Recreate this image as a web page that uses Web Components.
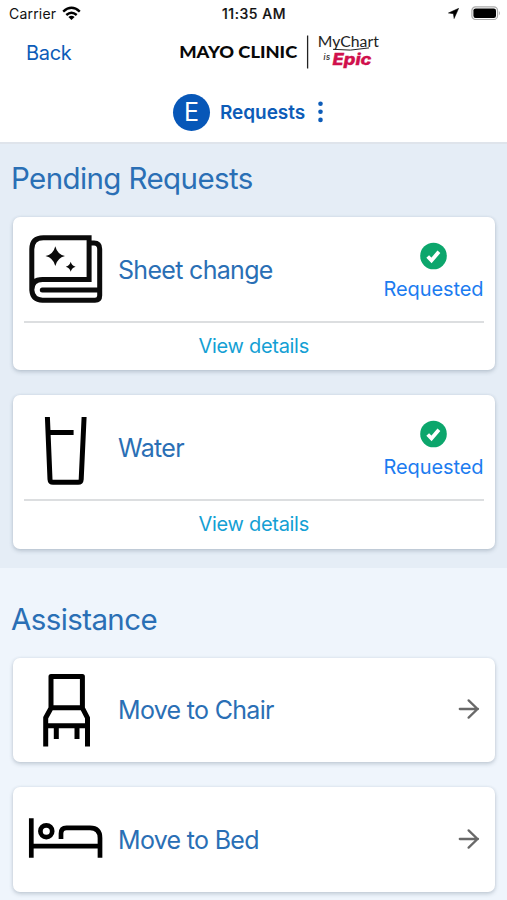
<!DOCTYPE html>
<html lang="en">
<head>
<meta charset="utf-8">
<title>Requests</title>
<style>
body{margin:0;width:507px;height:900px;overflow:hidden;background:#eff5fc;font-family:Inter,"Liberation Sans",sans-serif;color:#2a6fb5}
</style>
</head>
<body>
<requests-app></requests-app>
<script>
const define=(name,html,after)=>customElements.define(name,class extends HTMLElement{
  connectedCallback(){
    if(this.shadowRoot)return;
    const t=document.createElement('template');
    t.innerHTML=html.replace(/\{(\w+)\}/g,(m,k)=>this.hasAttribute(k)?this.getAttribute(k):m);
    this.attachShadow({mode:'open'}).append(t.content.cloneNode(true));
    if(after)after(this,this.shadowRoot);
  }
});

const ICONS={
  sheet:['25 229 80 80',`<g fill="none" stroke="#0b0b0b" stroke-width="5">
    <path d="M31.8 290V249.3Q31.8 237.7 43.4 237.7H89.1V279.6H42.5Q31.8 279.6 31.8 290Q32.5 299.8 42.5 300.2H95Q99.7 300.2 99.7 295.5V249Q99.7 243 94 243H91"/>
    <path d="M42.3 290H98" stroke-linecap="round"/></g>
    <path fill="#0b0b0b" d="M55.3 246.2Q57.3 254.2 65 256.1Q57.3 258 55.3 266Q53.4 258 45.5 256.1Q53.4 254.2 55.3 246.2ZM70.7 261.8Q71.7 265.8 75.6 266.8Q71.7 267.8 70.7 271.7Q69.7 267.8 65.8 266.8Q69.7 265.8 70.7 261.8Z"/>`],
  water:['25 407.2 80 80',`<g fill="none" stroke="#000" stroke-width="5"><path d="M47.4 416.2L50 478.5Q50.2 481.5 53 481.5H78.2Q81 481.5 81.2 478.5L84.1 416.2M48.5 431.8H73.6"/></g>`],
  chair:['25 669.5 80 80',`<g fill="none" stroke="#000" stroke-width="5" stroke-linejoin="round"><path d="M51 676.1H82.4V707.2H51ZM51.2 707.2L45.7 717.3V746M82.2 707.2L87.5 717.3V746M45.7 725.3H87.5M56.3 725V738.5M77 725V738.5"/></g>`],
  bed:['25 799 80 80',`<g fill="none" stroke="#000" stroke-width="4.7"><path d="M31.3 818.3V857.7M31.3 846.2H100M100 857.7V838Q100 827.8 90 827.8H66.5Q61 827.8 61 833.5V839"/><circle cx="46.3" cy="831.2" r="5.9"/></g>`]
};

define('ui-icon',`<style>:host{display:block;width:80px;height:80px;flex:none}svg{display:block}</style><svg width="80" height="80"></svg>`,(el,r)=>{
  const [box,body]=ICONS[el.getAttribute('name')],s=r.querySelector('svg');
  s.setAttribute('viewBox',box);s.innerHTML=body;
});

define('status-bar',`<style>
:host{display:grid;grid-template-columns:1fr auto 1fr;align-items:center;height:28px;padding:0 8px 0 9px;color:#111;font-size:14px;box-sizing:border-box}
.l,.r{display:flex;align-items:center;gap:6px}.r{justify-content:flex-end;gap:9px}
.time{font-weight:500;font-size:14px;letter-spacing:.55px;-webkit-text-stroke:.2px;margin-top:-1px}
.carrier{letter-spacing:.2px;margin-top:-1px}
svg{display:block}.r svg,.l svg{margin-top:-2px}
</style>
<div class="l"><span class="carrier">Carrier</span>
<svg width="19" height="15" viewBox="0 0 19 15"><g fill="none" stroke="#000" stroke-width="2.4"><path d="M1.2 5.6Q9.5-2 17.8 5.6M4.3 9Q9.5 4.3 14.7 9"/></g><path d="M9.5 14L6.4 10.9Q9.5 8.4 12.6 10.9Z"/></svg></div>
<span class="time">11:35 AM</span>
<div class="r"><svg style="margin-right:3px;margin-top:-1px" width="11" height="11" viewBox="0 0 11 11"><path d="M10.7.3L6.1 10.6L5.4 5.7L.4 5Z" stroke="#000" stroke-width=".5"/></svg>
<svg width="30" height="15" viewBox="0 0 30 15" style="margin-right:-2px"><rect x=".9" y=".9" width="25.6" height="12.6" rx="3.6" fill="#fff" stroke="#aaa" stroke-width="1.2"/><rect x="2.4" y="2.4" width="22.6" height="9.6" rx="2.2"/><path d="M27.9 5Q29.8 7.2 27.9 9.4Z" fill="#aaa"/></svg></div>`);

define('brand-logo',`<style>:host{display:block}svg{display:block}text{white-space:pre}</style>
<svg width="204" height="40" viewBox="178 32 204 40">
<text x="179.2" y="58.2" font-family="Lato" font-weight="900" font-size="17" textLength="118" lengthAdjust="spacingAndGlyphs" fill="#080808">MAYO CLINIC</text>
<path d="M307.6 35.5V68.5" stroke="#222" stroke-width="1.3"/>
<text x="317.8" y="47.4" font-family="Lato" font-size="15.6" textLength="61" lengthAdjust="spacingAndGlyphs" fill="#222">MyChart</text>
<path d="M333 49.3Q350 51.6 369 47.9" stroke="#222" stroke-width="1" fill="none"/>
<text x="323.6" y="60.3" font-family="Inter" font-style="italic" font-weight="600" font-size="7.5" textLength="6.5" fill="#333">is</text>
<text x="332.5" y="65" font-family="Inter" font-style="italic" font-weight="800" font-size="15.8" textLength="39" lengthAdjust="spacingAndGlyphs" fill="#d0104c" stroke="#d0104c" stroke-width=".3">Epic</text>
</svg>`);

define('app-header',`<style>
:host{display:block;height:144px;background:#fff;border-bottom:2px solid #dfe4eb;box-sizing:border-box;color:#0d5cb8}
.nav{display:grid;grid-template-columns:178px 204px 1fr;height:48px;align-items:center;padding:0}
.back{padding:1px 0 0 26px;font-size:20px;letter-spacing:-.3px}
.who{display:flex;align-items:center;height:36px;margin-top:18px;padding-left:173px}
.avatar{width:37px;height:37px;border-radius:50%;background:#0757b8;color:#fff;display:grid;place-items:center;font-size:25px}
.name{font-weight:600;font-size:19px;margin-left:10px;width:85px;white-space:nowrap;letter-spacing:-.05px}
svg{display:block;margin-left:13px}
</style>
<status-bar></status-bar>
<div class="nav"><span class="back">Back</span><brand-logo></brand-logo><span></span></div>
<div class="who"><span class="avatar">E</span><span class="name">Requests</span>
<svg width="5" height="22" viewBox="0 0 5 22" fill="#0d5cb8"><circle cx="2.5" cy="2.7" r="2.3"/><circle cx="2.5" cy="10.8" r="2.3"/><circle cx="2.5" cy="18.9" r="2.3"/></svg></div>`);

define('card-section',`<style>
:host{display:block;padding:0 12.5px 0 13px}
h2{margin:0 0 0 -2px;font-weight:400;font-size:29.5px;line-height:36px;letter-spacing:-.6px}
.list{display:flex;flex-direction:column;gap:25px;margin-top:21px}
</style><h2>{heading}</h2><div class="list"><slot></slot></div>`);

const CARD=`:host{display:block;box-sizing:border-box;background:#fff;border-radius:7px;box-shadow:0 2px 4px rgba(60,80,100,.24),0 0 3px rgba(60,80,100,.1)}
.row{display:flex;align-items:center;padding:0 12px;height:104.5px;box-sizing:border-box}
.label{font-size:25px;margin-left:13px;flex:1;white-space:nowrap;letter-spacing:-.69px;margin-top:1px}`;

define('request-card',`<style>${CARD}
:host{height:153.4px}
.status{width:100px;display:flex;flex-direction:column;align-items:center;font-size:20px;line-height:26px;color:#1c7cf0;letter-spacing:-.1px;gap:6px;margin:5px -1px 0 0}
.status svg{display:block}
.foot{margin:0 11px;border-top:2px solid #dcdee0;text-align:center;font-size:20px;line-height:47px;color:#14a0d4;height:46px;margin-top:-.5px;letter-spacing:-.3px}
</style>
<div class="row"><ui-icon name="{icon}"></ui-icon><span class="label"><slot></slot></span>
<div class="status"><svg width="28" height="28" viewBox="-13.5 -14 28 28"><circle r="13.3" fill="#0ca66c"/><path d="M-5.8.5L-2 4.4L5.4-4.2" fill="none" stroke="#fff" stroke-width="3.8"/></svg><span>Requested</span></div></div>
<div class="foot">View details</div>`);

define('action-card',`<style>${CARD}
:host{height:104.5px}
svg{display:block;margin:-1px 2px 0 0}
</style>
<div class="row"><ui-icon name="{icon}"></ui-icon><span class="label"><slot></slot></span>
<svg width="24" height="24" viewBox="457 697.3 24 24"><path d="M459.8 709.3H478M468.6 700.7L477.5 709.3L468.6 717.9" fill="none" stroke="#696969" stroke-width="2.3" stroke-linecap="round"/></svg></div>`);

define('requests-app',`<style>
:host{display:block}
.pending{background:#e5edf6;height:424px;padding-top:16px;box-sizing:border-box}
.assist{padding-top:32.5px}
</style>
<app-header></app-header>
<card-section class="pending" heading="Pending Requests"><request-card icon="sheet">Sheet change</request-card><request-card icon="water">Water</request-card></card-section>
<card-section class="assist" heading="Assistance"><action-card icon="chair">Move to Chair</action-card><action-card icon="bed">Move to Bed</action-card></card-section>`);
</script>
</body>
</html>
